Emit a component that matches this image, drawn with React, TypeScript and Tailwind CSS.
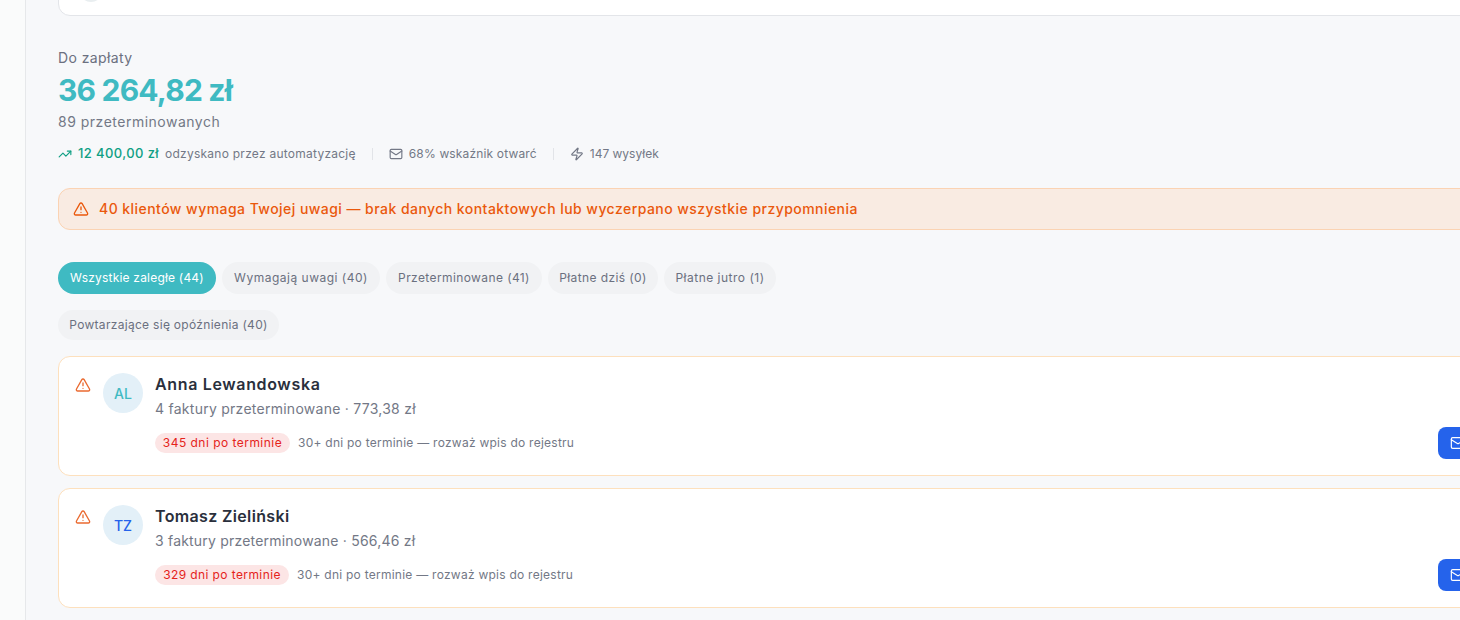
import { AlertTriangle, Mail, TrendingUp, Zap } from "lucide-react";

const font = { fontFamily: '"Inter", "Noto Sans", sans-serif' };

function Pill({ label, active, cls }: { label: string; active?: boolean; cls: string }) {
  return (
    <div
      className={`h-8 rounded-full flex items-center justify-center text-[12px] whitespace-nowrap ${cls} ${
        active ? "bg-[#3fbac2] text-white" : "bg-[#f1f2f4] text-[#6b7080]"
      }`}
    >
      {label}
    </div>
  );
}

function Client({ initials, color, name, nameCls, sub, subCls, days, badgeCls }: { initials: string; color: string; name: string; nameCls: string; sub: string; subCls: string; days: string; badgeCls: string }) {
  return (
    <div className="h-[120px] w-[1500px] shrink-0 rounded-xl border border-[#fde0bd] bg-white flex pl-4 pt-4">
      <AlertTriangle className="w-4 h-4 mt-1 text-[#ea6a30] shrink-0" strokeWidth={2} />
      <div className={`ml-3 w-10 h-10 rounded-full bg-[#e3f0f8] flex items-center justify-center text-[14px] font-medium shrink-0 ${color}`}>
        {initials}
      </div>
      <div className="ml-3 flex-1 flex flex-col">
        <div className={`text-[16px] leading-6 -mt-[1px] font-semibold text-[#2a2f3c] ${nameCls}`}>{name}</div>
        <div className={`text-[14px] leading-5 mt-[3px] text-[#737886] ${subCls}`}>{sub}</div>
        <div className="flex items-center mt-[8px] mr-[71px]">
          <div className={`h-5 rounded-full bg-[#fce5e5] text-[#e5231b] text-[12px] flex items-center justify-center ${badgeCls}`}>{days}</div>
          <div className="ml-2 text-[12px] text-[#737886] tracking-[0.25px]">30+ dni po terminie — rozważ wpis do rejestru</div>
          <div className="ml-auto w-12 h-8 rounded-lg bg-[#2563eb] flex items-center pl-3 text-white">
            <Mail className="w-4 h-4" strokeWidth={1.75} />
          </div>
        </div>
      </div>
    </div>
  );
}

export default function App() {
  return (
    <div style={font} className="w-[1460px] h-[620px] overflow-hidden flex bg-[#f7f8fa]">
      <div className="w-[26px] shrink-0 bg-[#fafbfb] border-r border-[#e6e8ea]" />
      <div className="flex-1 pl-8 min-w-0">
        <div className="w-[1500px] h-[60px] -mt-11 rounded-xl border border-[#e3e5e9] bg-white pl-5">
          <div className="w-6 h-6 mt-[21px] rounded-full bg-[#e9eef0]" />
        </div>

        <div className="mt-8 text-[14px] leading-5 text-[#6b7080] tracking-[0.4px]">Do zapłaty</div>
        <div className="mt-1 text-[30px] leading-9 font-bold text-[#3fbac2] -tracking-[0.8px]">36 264,82 zł</div>
        <div className="mt-1 text-[14px] leading-5 text-[#737886] tracking-[0.5px]">89 przeterminowanych</div>

        <div className="mt-[12px] flex items-center h-5 text-[12px] text-[#737886] whitespace-nowrap">
          <TrendingUp className="w-3.5 h-3.5 text-[#0f9f84]" />
          <span className="ml-1.5 text-[13px] font-medium text-[#0f9f84] tracking-[0.4px]">12 400,00 zł</span>
          <span className="ml-1.5 tracking-[0.25px]">odzyskano przez automatyzację</span>
          <span className="ml-4 w-px h-3 bg-[#e2e4e8]" />
          <Mail className="ml-4 w-3.5 h-3.5" />
          <span className="ml-1.5 tracking-[0.15px]">68% wskaźnik otwarć</span>
          <span className="ml-4 w-px h-3 bg-[#e2e4e8]" />
          <Zap className="ml-4 w-3.5 h-3.5" />
          <span className="ml-1.5">147 wysyłek</span>
        </div>

        <div className="mt-[24px] h-[42px] w-[1500px] rounded-xl border border-[#fbd3b3] bg-[#f9ebe2] flex items-center pl-[14px] text-[#ea580c]">
          <AlertTriangle className="w-4 h-4" />
          <span className="ml-2.5 -mt-px text-[14px] font-medium tracking-[0.45px]">40 klientów wymaga Twojej uwagi — brak danych kontaktowych lub wyczerpano wszystkie przypomnienia</span>
        </div>

        <div className="mt-8 flex gap-1.5">
          <Pill label="Wszystkie zaległe (44)" active cls="w-[158px] tracking-[0.2px]" />
          <Pill label="Wymagają uwagi (40)" cls="w-[158px] tracking-[0.5px]" />
          <Pill label="Przeterminowane (41)" cls="w-[156px] tracking-[0.4px]" />
          <Pill label="Płatne dziś (0)" cls="w-[110px] tracking-[0.4px]" />
          <Pill label="Płatne jutro (1)" cls="w-[112px] tracking-[0.5px]" />
        </div>
        <div className="mt-4 flex">
          <div className="h-[30px] w-[221px] rounded-full bg-[#f1f2f4] text-[#6b7080] text-[12px] flex items-center justify-center tracking-[0.3px]">Powtarzające się opóźnienia (40)</div>
        </div>

        <div className="mt-4 flex flex-col gap-3">
          <Client initials="AL" color="text-[#3fbac2]" name="Anna Lewandowska" nameCls="tracking-[0.65px]" sub="4 faktury przeterminowane · 773,38 zł" subCls="tracking-[0.26px]" days="345 dni po terminie" badgeCls="w-[135px] tracking-[0.47px]" />
          <Client initials="TZ" color="text-[#2563eb]" name="Tomasz Zieliński" nameCls="tracking-[0.35px]" sub="3 faktury przeterminowane · 566,46 zł" subCls="tracking-[0.2px]" days="329 dni po terminie" badgeCls="w-[134px] tracking-[0.4px]" />
        </div>
      </div>
    </div>
  );
}
